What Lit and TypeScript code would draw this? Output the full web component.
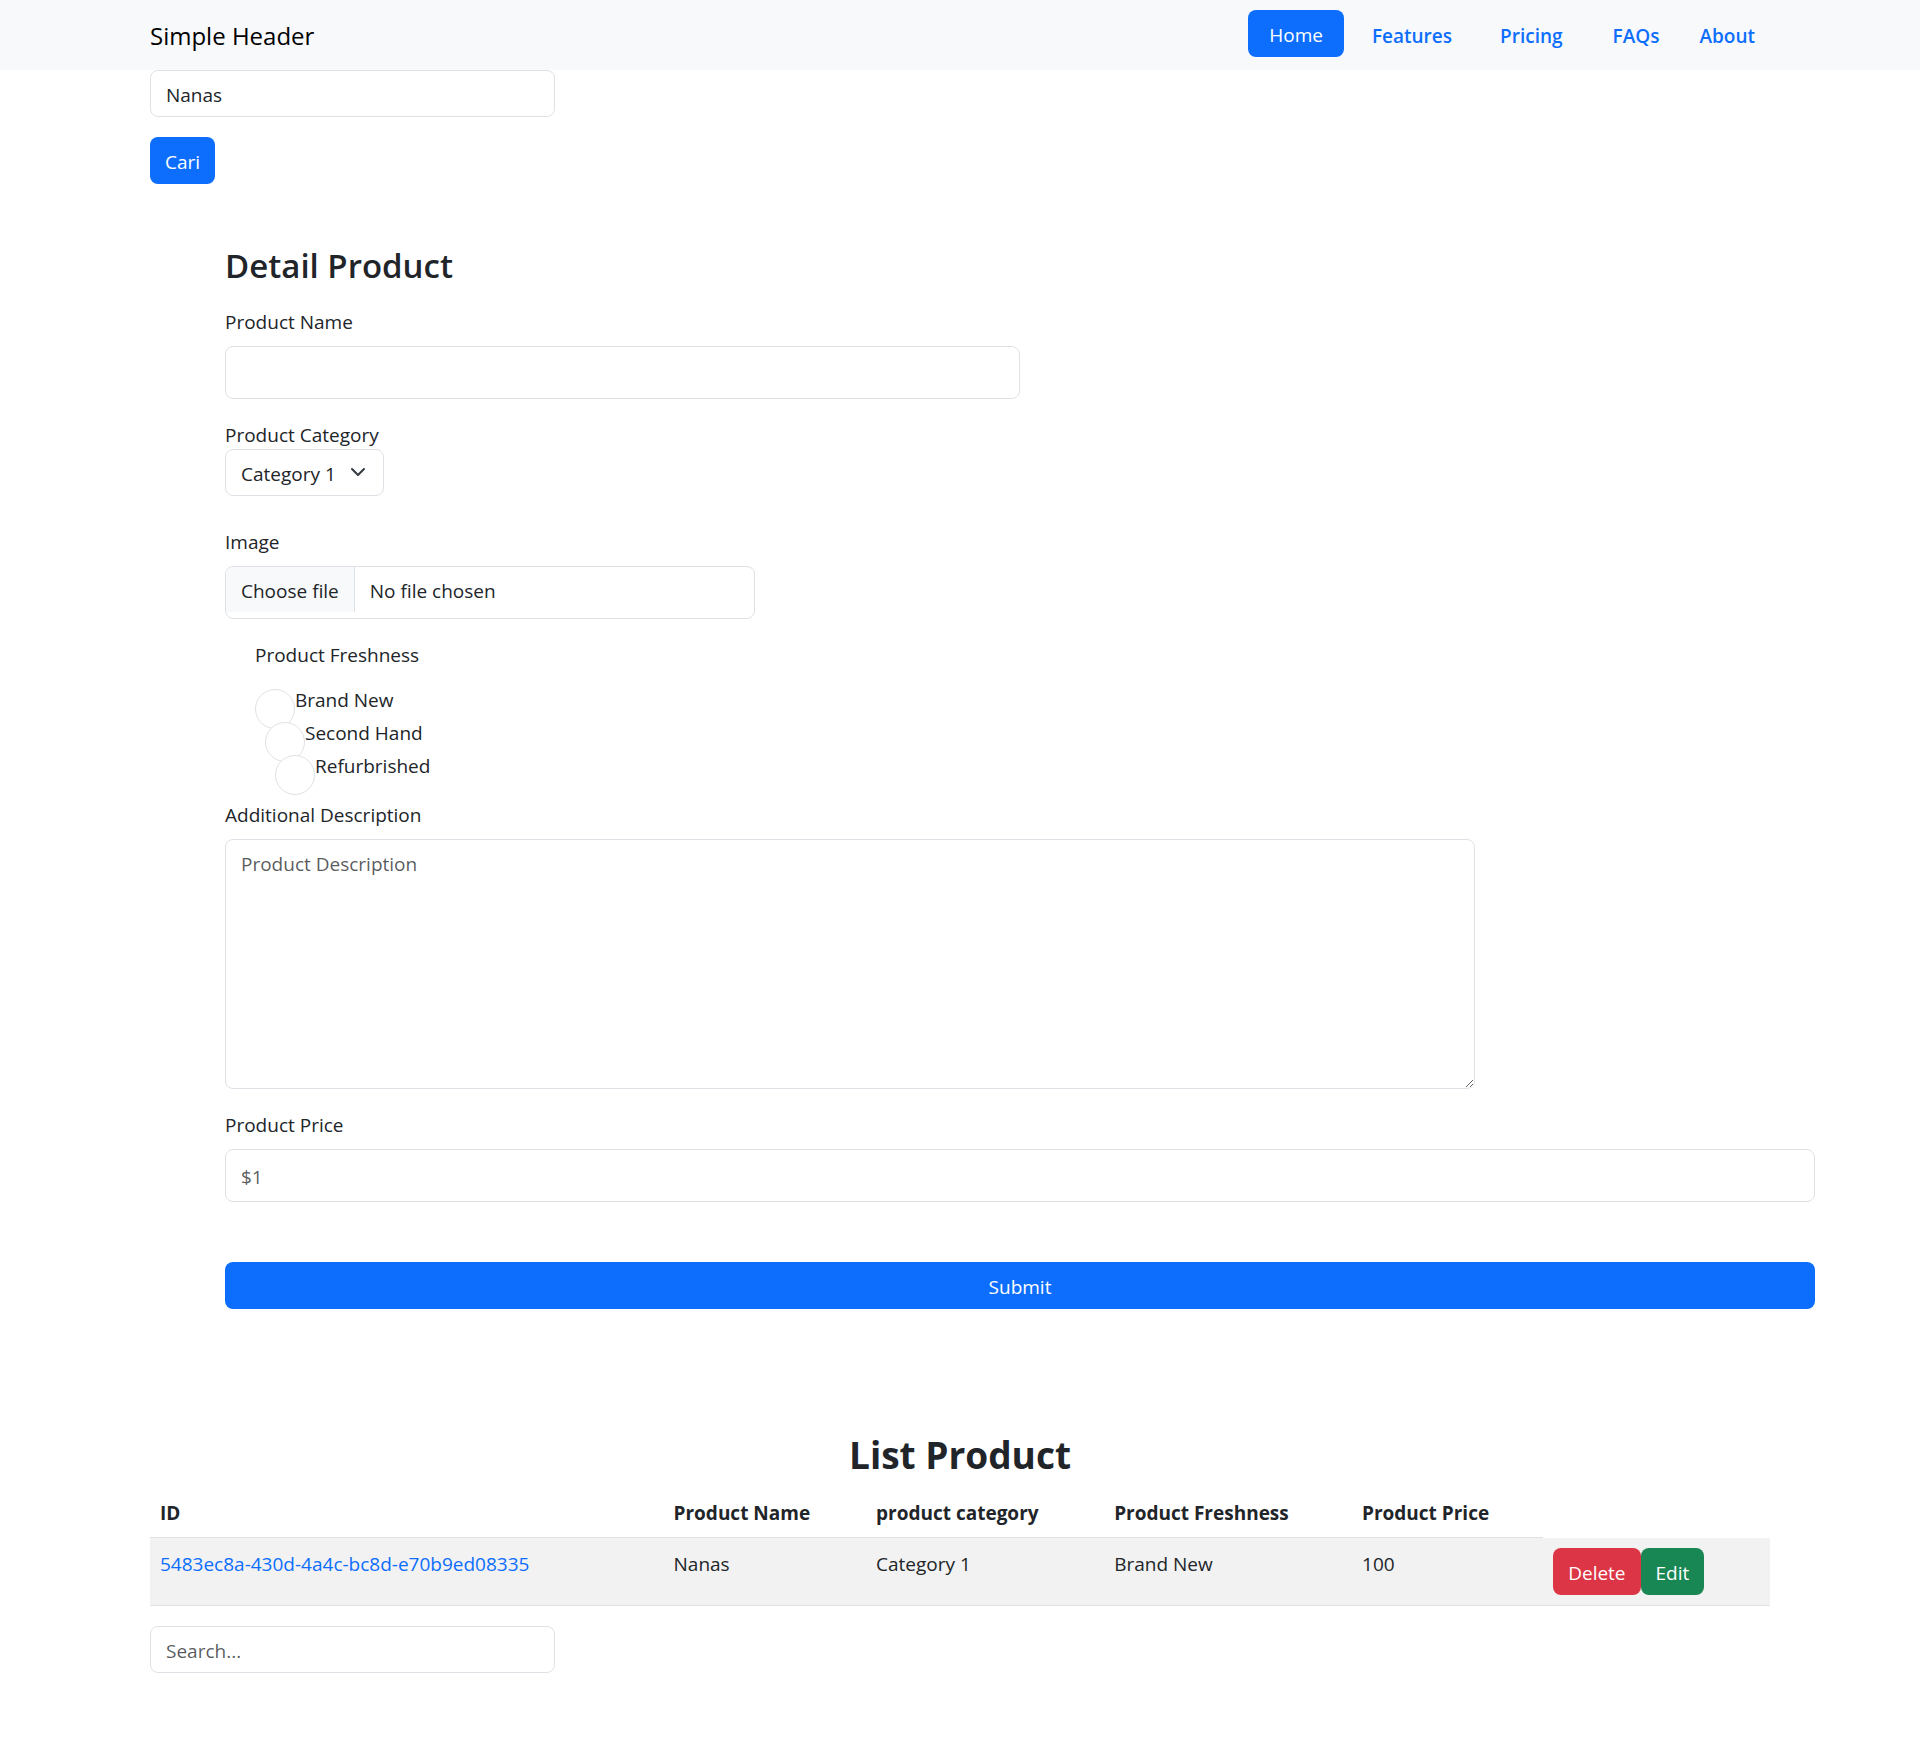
import { LitElement, html, css } from "lit";
import { customElement, state } from "lit/decorators.js";
import { classMap } from "lit/directives/class-map.js";

interface Product {
  id: string;
  name: string;
  category: string;
  freshness: string;
  price: number;
}

const NAV = [
  { label: "Home", kind: "active" },
  { label: "Features", kind: "wide" },
  { label: "Pricing", kind: "wider" },
  { label: "FAQs", kind: "wider" },
  { label: "About", kind: "plain" },
];

const FRESHNESS = ["Brand New", "Second Hand", "Refurbrished"];

@customElement("app-root")
export class AppRoot extends LitElement {
  static styles = css`
    :host {
      display: block;
      font-family: "Open Sans", "Noto Sans", sans-serif;
      font-size: 19px;
      line-height: 30px;
      color: #212529;
      background: #fff;
    }
    * {
      box-sizing: border-box;
    }
    h2,
    h3,
    ul {
      margin: 0;
      padding: 0;
    }
    input,
    select,
    textarea,
    button {
      font: inherit;
      color: inherit;
      margin: 0;
    }
    a {
      color: #0d6efd;
      text-decoration: none;
    }
    .container {
      max-width: 1650px;
      margin: 0 auto;
      padding: 0 15px;
    }
    .header {
      background: #f8f9fa;
    }
    .bar {
      display: flex;
      justify-content: space-between;
      align-items: flex-start;
      height: 70px;
      padding-top: 10px;
    }
    .brand {
      font-size: 24px;
      line-height: 52px;
      color: #000;
    }
    .nav {
      display: flex;
      list-style: none;
      align-items: flex-start;
    }
    .nav a {
      display: block;
      font-weight: 600;
      padding: 11px 15px 6px;
    }
    .nav .wide {
      padding-left: 28px;
      padding-right: 23px;
    }
    .nav .wider {
      padding-left: 25px;
      padding-right: 25px;
    }
    .nav .active {
      color: #fff;
      font-weight: 500;
      background: #0d6efd;
      border-radius: 8px;
      padding: 10px 21px 7px;
    }
    .control {
      display: block;
      width: 100%;
      height: 53px;
      padding: 8px 15px 6px;
      border: 1px solid #dee2e6;
      border-radius: 8px;
      background: #fff;
      outline: none;
    }
    .control:focus-visible {
      border-color: #86b7fe;
    }
    .control::placeholder {
      color: rgba(33, 37, 41, 0.75);
      opacity: 1;
    }
    .search {
      width: 25%;
      height: 47px;
    }
    .half {
      width: 50%;
    }
    .btn {
      display: inline-block;
      height: 47px;
      padding: 2px 15px 0;
      border: 0;
      border-radius: 8px;
      color: #fff;
      background: #0d6efd;
      cursor: pointer;
    }
    .danger {
      background: #dc3545;
    }
    .success {
      background: #198754;
    }
    .find {
      display: grid;
      gap: 20px;
      justify-items: start;
    }
    .detail {
      display: flex;
      flex-direction: column;
      gap: 20px;
      margin: 60px -45px 0 75px;
    }
    .title {
      padding-top: 2px;
      font-size: 33px;
      line-height: 40px;
      font-weight: 600;
    }
    .field {
      display: flex;
      flex-direction: column;
      align-items: flex-start;
      gap: 10px;
    }
    label,
    .legend {
      padding: 2px 0 0;
      line-height: 28px;
    }
    .tight {
      gap: 0;
      margin-bottom: 10px;
    }
    .pick {
      position: relative;
      display: flex;
    }
    .select {
      width: auto;
      height: 47px;
      padding-right: 47px;
      appearance: none;
    }
    .chevron {
      position: absolute;
      right: 18px;
      top: 15px;
      width: 16px;
      height: 16px;
      pointer-events: none;
    }
    .file {
      position: relative;
      display: flex;
      align-items: flex-start;
      width: calc(100% / 3);
      padding: 0;
      overflow: hidden;
    }
    .file-button,
    .file-name {
      padding: 9px 15px 6px;
    }
    .file-button {
      background: #f8f9fa;
      border-right: 1px solid #dee2e6;
    }
    .file-input {
      position: absolute;
      inset: 0;
      opacity: 0;
      width: 100%;
      cursor: pointer;
    }
    .freshness {
      border: 0;
      margin: 0;
      padding: 0 0 0 30px;
      min-width: 0;
    }
    .legend {
      margin-bottom: 15px;
    }
    .options {
      display: grid;
      grid-auto-rows: 33px;
      height: 95px;
    }
    .option {
      display: flex;
      align-items: flex-start;
    }
    .option:nth-child(2) {
      margin-left: 10px;
    }
    .option:nth-child(3) {
      margin-left: 20px;
    }
    .radio {
      appearance: none;
      flex: none;
      width: 40px;
      height: 40px;
      margin-top: 5px;
      border: 1px solid #dee2e6;
      border-radius: 50%;
      background: #fff;
    }
    .radio:checked {
      background: radial-gradient(circle, #fff 35%, #0d6efd 38%);
    }
    .area {
      width: 1250px;
      max-width: 100%;
      height: 250px;
      padding: 9px 15px;
    }
    .submit {
      width: 100%;
      margin-top: 40px;
    }
    .list-title {
      margin-top: 122px;
      margin-bottom: 8px;
      font-size: 37px;
      line-height: 48px;
      font-weight: 700;
      text-align: center;
    }
    .table {
      width: 100%;
      table-layout: fixed;
      border-spacing: 0;
      margin-bottom: 20px;
    }
    .table th,
    .table td {
      padding: 11px 10px 9px;
      text-align: left;
      vertical-align: top;
      border-bottom: 1px solid #dee2e6;
      white-space: nowrap;
    }
    .table td {
      background: #f2f2f2;
    }
    .table .tools {
      padding: 10px;
    }
    .c-id {
      width: 31.7%;
    }
    .c-name {
      width: 12.5%;
    }
    .c-cat {
      width: 14.7%;
    }
    .c-fresh {
      width: 15.3%;
    }
    .c-price {
      width: 11.8%;
    }
    .actions {
      display: flex;
    }
    .filter {
      margin-bottom: 80px;
    }
  `;

  @state() private fileName = "No file chosen";
  @state() private products: Product[] = [
    {
      id: "5483ec8a-430d-4a4c-bc8d-e70b9ed08335",
      name: "Nanas",
      category: "Category 1",
      freshness: "Brand New",
      price: 100,
    },
  ];

  private onFile(e: Event) {
    const files = (e.target as HTMLInputElement).files;
    this.fileName = files && files.length ? files[0].name : "No file chosen";
  }

  private remove(id: string) {
    this.products = this.products.filter((p) => p.id !== id);
  }

  private renderHeader() {
    return html`<header class="header">
      <div class="container bar">
        <a class="brand" href="#">Simple Header</a>
        <nav>
          <ul class="nav">
            ${NAV.map(
              (n) => html`<li><a href="#" class=${classMap({ [n.kind]: true })}>${n.label}</a></li>`
            )}
          </ul>
        </nav>
      </div>
    </header>`;
  }

  private renderForm() {
    return html`<form class="detail" @submit=${(e: Event) => e.preventDefault()}>
      <h3 class="title">Detail Product</h3>
      <div class="field">
        <label for="name">Product Name</label>
        <input id="name" class="control half" type="text" />
      </div>
      <div class="field tight">
        <label for="category">Product Category</label>
        <div class="pick">
          <select id="category" class="control select">
            <option>Category 1</option>
          </select>
          <svg class="chevron" viewBox="0 0 16 16" aria-hidden="true">
            <path d="m2 5 6 6 6-6" fill="none" stroke="#343a40" stroke-width="2"
              stroke-linecap="round" stroke-linejoin="round" />
          </svg>
        </div>
      </div>
      <div class="field">
        <label for="image">Image</label>
        <div class="control file">
          <span class="file-button">Choose file</span>
          <span class="file-name">${this.fileName}</span>
          <input id="image" class="file-input" type="file" @change=${this.onFile} />
        </div>
      </div>
      <fieldset class="freshness">
        <legend class="legend">Product Freshness</legend>
        <div class="options">
          ${FRESHNESS.map(
            (f, i) => html`<div class="option">
              <input id="fresh-${i}" class="radio" type="radio" name="freshness" />
              <label for="fresh-${i}">${f}</label>
            </div>`
          )}
        </div>
      </fieldset>
      <div class="field">
        <label for="description">Additional Description</label>
        <textarea id="description" class="control area" placeholder="Product Description"></textarea>
      </div>
      <div class="field">
        <label for="price">Product Price</label>
        <input id="price" class="control" type="text" placeholder="$1" />
      </div>
      <button class="btn submit" type="submit">Submit</button>
    </form>`;
  }

  private renderList() {
    return html`<h2 class="list-title">List Product</h2>
      <table class="table">
        <colgroup>
          <col class="c-id" />
          <col class="c-name" />
          <col class="c-cat" />
          <col class="c-fresh" />
          <col class="c-price" />
          <col />
        </colgroup>
        <thead>
          <tr>
            <th scope="col">ID</th>
            <th scope="col">Product Name</th>
            <th scope="col">product category</th>
            <th scope="col">Product Freshness</th>
            <th scope="col">Product Price</th>
          </tr>
        </thead>
        <tbody>
          ${this.products.map(
            (p) => html`<tr>
              <td><a href="#">${p.id}</a></td>
              <td>${p.name}</td>
              <td>${p.category}</td>
              <td>${p.freshness}</td>
              <td>${p.price}</td>
              <td class="tools">
                <div class="actions">
                  <button class="btn danger" type="button" @click=${() => this.remove(p.id)}>Delete</button>
                  <button class="btn success" type="button">Edit</button>
                </div>
              </td>
            </tr>`
          )}
        </tbody>
      </table>
      <input class="control search filter" type="text" placeholder="Search..." aria-label="Search..." />`;
  }

  render() {
    return html`${this.renderHeader()}
      <main class="container">
        <div class="find">
          <input class="control search" type="text" value="Nanas" aria-label="Cari" />
          <button class="btn" type="button">Cari</button>
        </div>
        ${this.renderForm()} ${this.renderList()}
      </main>`;
  }
}
